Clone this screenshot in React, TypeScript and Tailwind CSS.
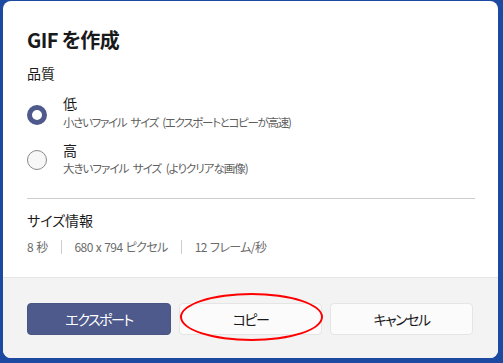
import React from "react";

const font = {
  fontFamily: '"Noto Sans CJK JP", "Noto Sans", sans-serif',
  fontFeatureSettings: '"palt"',
};

export default function App() {
  return (
    <div className="w-[503px] h-[363px] bg-[#1c4aa0] pl-[3px] pt-[1px] pr-[5px] pb-[5px]" style={font}>
      <div className="w-[495px] h-[357px] bg-white rounded-[8px] overflow-hidden flex flex-col">
        <div className="h-[276px] px-[24px] pt-[25px] flex flex-col">
          <div className="text-[20px] leading-[28px] font-semibold text-[#1a1a1a] tracking-[-0.6px]">GIF を作成</div>
          <div className="mt-[9px] text-[14px] leading-[20px] text-[#1a1a1a]">品質</div>
          <div className="mt-[10px] flex items-start">
            <div className="mt-[12px] w-[20px] h-[20px] rounded-full border-[5px] border-[#4e5a8b] bg-white" />
            <div className="ml-[16px] flex flex-col">
              <div className="text-[14px] leading-[20px] text-[#1a1a1a]">低</div>
              <div className="mt-[1px] text-[11.5px] leading-[16px] text-[#5f5f5f] tracking-[-1.3px] [word-spacing:3px]">小さいファイル サイズ (エクスポートとコピーが高速)</div>
            </div>
          </div>
          <div className="mt-[10px] flex items-start">
            <div className="mt-[10px] w-[20px] h-[20px] rounded-full border border-[#8a8a8a] bg-[#f7f7f7]" />
            <div className="ml-[16px] flex flex-col">
              <div className="text-[14px] leading-[20px] text-[#1a1a1a]">高</div>
              <div className="text-[11.5px] leading-[16px] text-[#5f5f5f] tracking-[-1px] [word-spacing:3px]">大きいファイル サイズ (よりクリアな画像)</div>
            </div>
          </div>
          <div className="mt-[22px] h-px bg-[#cccccc] w-[448px]" />
          <div className="mt-[11px] text-[14px] leading-[20px] text-[#1a1a1a]">サイズ情報</div>
          <div className="mt-[9px] flex items-center text-[12px] leading-[16px] text-[#6b6b6b] tracking-[-0.6px] [word-spacing:1px]">
            <span>8 秒</span>
            <span className="mx-[13px] w-px h-[14px] bg-[#cccccc]" />
            <span>680 x 794 ピクセル</span>
            <span className="mx-[13px] w-px h-[14px] bg-[#cccccc]" />
            <span>12 フレーム/秒</span>
          </div>
        </div>
        <div className="flex-1 bg-[#f3f3f3] border-t border-[#e5e5e5] px-[24px] pt-[25px] flex gap-[8px]">
          <button className="w-[144px] h-[32px] rounded-[4px] bg-[#4e5a8b] text-white text-[14px] border border-[#485483] tracking-[-1.5px]">エクスポート</button>
          <div className="relative">
            <button className="w-[143px] h-[32px] rounded-[4px] bg-[#fbfbfb] text-[#1a1a1a] text-[14px] border border-[#e5e5e5] tracking-[-1.5px]">コピー</button>
            <div className="absolute left-[1px] top-[-10px] w-[143px] h-[48px] rounded-[50%] border-2 border-[#ff0000] pointer-events-none" />
          </div>
          <button className="w-[143px] h-[32px] rounded-[4px] bg-[#fbfbfb] text-[#1a1a1a] text-[14px] border border-[#e5e5e5] tracking-[-1.5px]">キャンセル</button>
        </div>
      </div>
    </div>
  );
}
